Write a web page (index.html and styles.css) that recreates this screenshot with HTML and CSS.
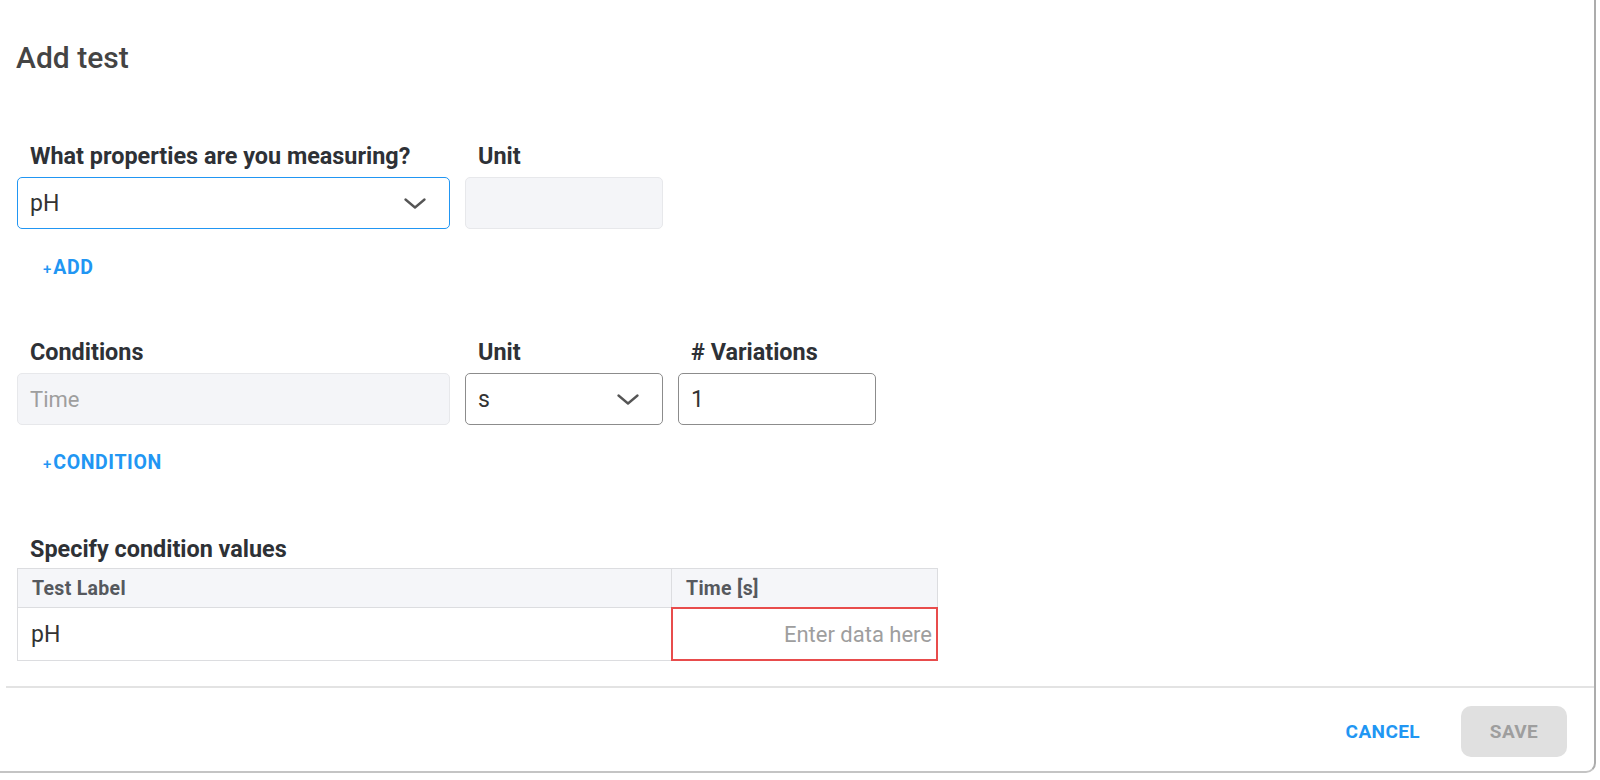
FILE: index.html
```html
<!DOCTYPE html>
<html>
<head>
<meta charset="utf-8">
<link rel="stylesheet" href="styles.css">
</head>
<body>
<div class="dialog">
  <h1 class="title">Add test</h1>
  <div class="content">
    <div class="row row1">
      <div class="field wide">
        <label class="label">What properties are you measuring?</label>
        <div class="select focused"><span class="value">pH</span>
          <svg class="chev" width="22" height="11" viewBox="0 0 22 11"><path d="M1.5 1.5 L11 9.5 L20.5 1.5" fill="none" stroke="#555555" stroke-width="2.3" stroke-linecap="round" stroke-linejoin="round"/></svg>
        </div>
      </div>
      <div class="field narrow">
        <label class="label">Unit</label>
        <div class="input disabled"></div>
      </div>
    </div>
    <div class="addlink"><span class="plus">+</span>ADD</div>

    <div class="row row2">
      <div class="field wide">
        <label class="label">Conditions</label>
        <div class="input disabled"><span class="placeholder">Time</span></div>
      </div>
      <div class="field narrow">
        <label class="label">Unit</label>
        <div class="select"><span class="value">s</span>
          <svg class="chev" width="22" height="11" viewBox="0 0 22 11"><path d="M1.5 1.5 L11 9.5 L20.5 1.5" fill="none" stroke="#555555" stroke-width="2.3" stroke-linecap="round" stroke-linejoin="round"/></svg>
        </div>
      </div>
      <div class="field narrow">
        <label class="label"># Variations</label>
        <div class="input plain"><span class="value">1</span></div>
      </div>
    </div>
    <div class="addlink"><span class="plus">+</span>CONDITION</div>

    <div class="label spec">Specify condition values</div>
    <div class="table">
      <div class="th c1">Test Label</div>
      <div class="th c2">Time [s]</div>
      <div class="td c1"><span class="value">pH</span></div>
      <div class="td c2 invalid"><span class="placeholder">Enter data here</span></div>
    </div>
  </div>
  <div class="footer">
    <button class="btn cancel">CANCEL</button>
    <button class="btn save">SAVE</button>
  </div>
</div>
</body>
</html>
```
FILE: styles.css
```css
* { box-sizing: border-box; }
html, body { margin: 0; padding: 0; background: #ffffff; }
body {
  font-family: Roboto, "Liberation Sans", sans-serif;
  width: 1600px;
  height: 780px;
  overflow: hidden;
}

.dialog {
  width: 1596px;
  height: 773px;
  background: #fff;
  border-right: 2px solid #acacac;
  border-bottom: 2px solid #c4c4c4;
  border-bottom-right-radius: 10px;
}

.title {
  margin: 0;
  padding: 40px 0 0 16px;
  font-size: 30px;
  font-weight: 500;
  color: #444444;
  line-height: 36px;
  height: 76px;
}

.content { padding: 66px 0 0 17px; }

.row { display: flex; gap: 15px; }
.row2 { margin-top: 56px; }
.field { display: flex; flex-direction: column; }
.wide { width: 433px; }
.narrow { width: 198px; }

.label {
  font-size: 23.4px;
  font-weight: 700;
  color: #2e3136;
  padding-left: 13px;
  line-height: 28px;
  margin-bottom: 7px;
}

.select, .input {
  height: 52px;
  border-radius: 5px;
  display: flex;
  align-items: center;
  padding: 0 12px;
}
.select { border: 1px solid #8c8c8c; justify-content: space-between; }
.select.focused { border: 1.5px solid #2196f3; }
.input.disabled { background: #f4f5f8; border: 1px solid #e7e8eb; }
.input.plain { border: 1px solid #8c8c8c; }
.chev { margin-right: 11px; }

.value { font-size: 23px; color: #333; }
.placeholder { font-size: 22px; color: #9e9e9e; }

.addlink {
  margin-top: 26px;
  padding-left: 26px;
  font-size: 19.5px;
  font-weight: 700;
  letter-spacing: 0.6px;
  color: #2196f3;
  line-height: 26px;
}
.row2 + .addlink { margin-top: 25px; }
.plus { font-size: 15px; font-weight: 500; margin-right: 2px; letter-spacing: 0; }

.spec { margin-top: 58px; margin-bottom: 5px; }

.table {
  display: grid;
  grid-template-columns: 653px 266px;
  width: 921px;
  border: 1px solid #dcdde0;
}
.th {
  height: 39px;
  background: #f5f6f9;
  font-size: 19.5px;
  font-weight: 700;
  letter-spacing: 0.3px;
  color: #56595e;
  display: flex;
  align-items: center;
  padding-left: 14px;
  border-bottom: 1px solid #dcdde0;
}
.c2 { border-left: 1px solid #dcdde0; }
.td {
  height: 52px;
  display: flex;
  align-items: center;
  padding-left: 13px;
}
.td.invalid {
  position: relative;
  justify-content: flex-end;
  padding-right: 5px;
}
.td.invalid::after {
  content: "";
  position: absolute;
  top: -1px;
  left: -1px;
  right: -1px;
  bottom: -1px;
  border: 2px solid #e84c4c;
  pointer-events: none;
}

.footer {
  margin-top: 25px;
  margin-left: 6px;
  border-top: 2px solid #e3e3e3;
  display: flex;
  justify-content: flex-end;
  align-items: center;
  padding: 18px 27px 0 0;
  gap: 41px;
}
.btn {
  font-family: Roboto, "Liberation Sans", sans-serif;
  font-size: 19px;
  font-weight: 700;
  letter-spacing: 0.4px;
  border: none;
  background: none;
  padding: 0;
  cursor: pointer;
}
.cancel { color: #2196f3; height: 51px; }
.save {
  background: #e0e0e0;
  color: #9e9e9e;
  width: 106px;
  height: 51px;
  border-radius: 10px;
}
```
